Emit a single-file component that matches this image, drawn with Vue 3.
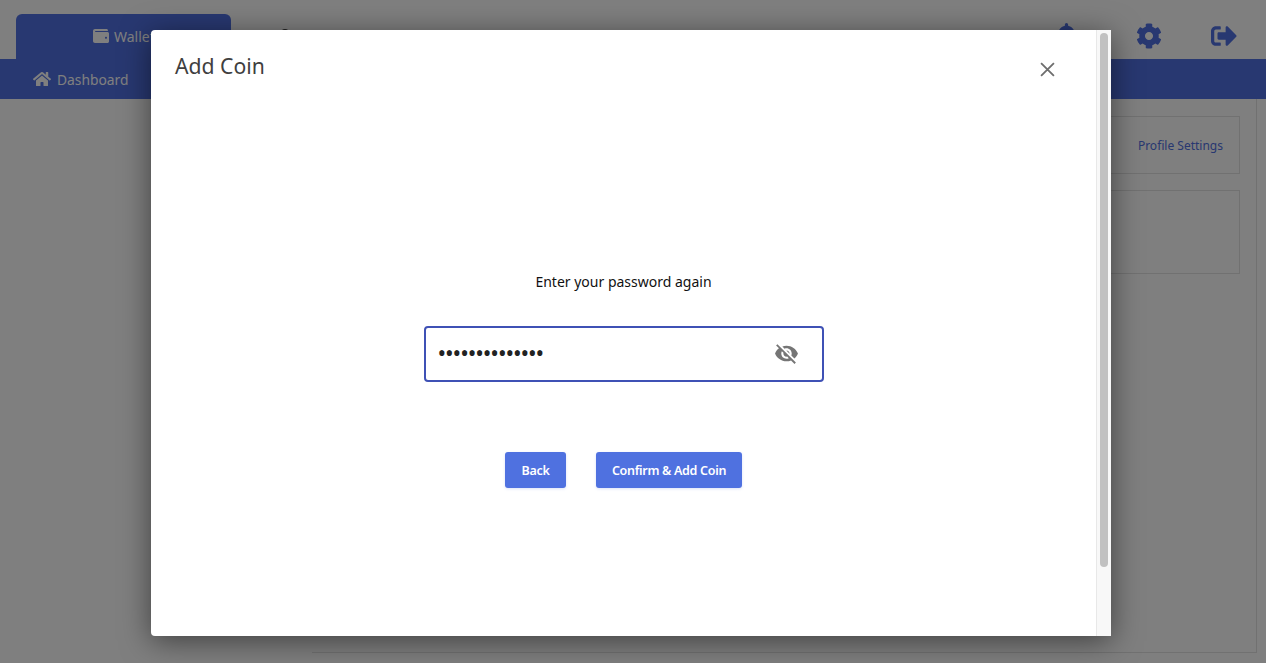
<template>
  <div class="page">
    <header class="top-bar">
      <div class="tabs">
        <div class="tab active">
          <svg class="tab-icon" viewBox="0 0 512 512"><path d="M461.2 128H80c-8.84 0-16-7.16-16-16s7.16-16 16-16h384c8.84 0 16-7.16 16-16 0-26.51-21.49-48-48-48H64C28.65 32 0 60.65 0 96v320c0 35.35 28.65 64 64 64h397.2c28.02 0 50.8-21.53 50.8-48V176c0-26.47-22.78-48-50.8-48zM416 340c-17.67 0-32-14.33-32-32s14.33-32 32-32 32 14.33 32 32-14.33 32-32 32z" /></svg>
          <span>Wallet</span>
        </div>
        <div class="tab-dot"></div>
      </div>
      <div class="top-icons">
        <svg class="top-icon bell" viewBox="0 0 448 512"><path d="M224 512c35.32 0 63.97-28.65 63.97-64H160.03c0 35.35 28.65 64 63.97 64zm215.39-149.71c-19.32-20.76-55.47-51.99-55.47-154.29 0-77.7-54.48-139.9-127.94-155.16V32c0-17.67-14.32-32-31.98-32s-31.98 14.33-31.98 32v20.84C118.56 68.1 64.08 130.3 64.08 208c0 102.3-36.15 133.53-55.47 154.29-6 6.45-8.66 14.16-8.61 21.71.11 16.4 12.98 32 32.1 32h383.8c19.12 0 32-15.6 32.1-32 .05-7.55-2.61-15.27-8.61-21.71z" /></svg>
        <svg class="top-icon gear" viewBox="0 0 512 512"><path d="M487.4 315.7l-42.6-24.6c4.3-23.2 4.3-47 0-70.2l42.6-24.6c4.9-2.8 7.1-8.6 5.5-14-11.1-35.6-30-67.8-54.7-94.6-3.8-4.1-10-5.1-14.8-2.3L380.8 110c-17.9-15.4-38.5-27.3-60.8-35.1V25.8c0-5.6-3.9-10.5-9.4-11.7-36.7-8.2-74.3-7.8-109.2 0-5.5 1.2-9.4 6.1-9.4 11.7V75c-22.2 7.9-42.8 19.8-60.8 35.1L88.7 85.5c-4.9-2.8-11-1.9-14.8 2.3-24.7 26.7-43.6 58.9-54.7 94.6-1.7 5.4.6 11.2 5.5 14L67.3 221c-4.3 23.2-4.3 47 0 70.2l-42.6 24.6c-4.9 2.8-7.1 8.6-5.5 14 11.1 35.6 30 67.8 54.7 94.6 3.8 4.1 10 5.1 14.8 2.3l42.6-24.6c17.9 15.4 38.5 27.3 60.8 35.1v49.2c0 5.6 3.9 10.5 9.4 11.7 36.7 8.2 74.3 7.8 109.2 0 5.5-1.2 9.4-6.1 9.4-11.7v-49.2c22.2-7.9 42.8-19.8 60.8-35.1l42.6 24.6c4.9 2.8 11 1.9 14.8-2.3 24.7-26.7 43.6-58.9 54.7-94.6 1.5-5.5-.7-11.3-5.6-14.1zM256 336c-44.1 0-80-35.9-80-80s35.9-80 80-80 80 35.9 80 80-35.9 80-80 80z" /></svg>
        <svg class="top-icon logout" viewBox="0 0 512 512"><path d="M497 273L329 441c-15 15-41 4.5-41-17v-96H152c-13.3 0-24-10.7-24-24v-96c0-13.3 10.7-24 24-24h136V88c0-21.4 25.9-32 41-17l168 168c9.3 9.4 9.3 24.6 0 34zM192 436v-40c0-6.6-5.4-12-12-12H96c-17.7 0-32-14.3-32-32V160c0-17.7 14.3-32 32-32h84c6.6 0 12-5.4 12-12V76c0-6.6-5.4-12-12-12H96c-53 0-96 43-96 96v192c0 53 43 96 96 96h84c6.6 0 12-5.4 12-12z" /></svg>
      </div>
    </header>

    <nav class="nav-bar">
      <svg class="nav-icon" viewBox="0 0 576 512"><path d="M280.37 148.26L96 300.11V464a16 16 0 0 0 16 16l112.06-.29a16 16 0 0 0 15.92-16V368a16 16 0 0 1 16-16h64a16 16 0 0 1 16 16v95.64a16 16 0 0 0 16 16.05L464 480a16 16 0 0 0 16-16V300L295.67 148.26a12.19 12.19 0 0 0-15.3 0zM571.6 251.47L488 182.56V44.05a12 12 0 0 0-12-12h-56a12 12 0 0 0-12 12v72.61L318.47 43a48 48 0 0 0-61 0L4.34 251.47a12 12 0 0 0-1.6 16.9l25.5 31A12 12 0 0 0 45.15 301l235.22-193.74a12.19 12.19 0 0 1 15.3 0L530.9 301a12 12 0 0 0 16.9-1.6l25.5-31a12 12 0 0 0-1.7-16.93z" /></svg>
      <span>Dashboard</span>
    </nav>

    <main class="content">
      <div class="panel">
        <div class="card card-top"><a class="card-link">Profile Settings</a></div>
        <div class="card card-bottom"></div>
      </div>
    </main>

    <div class="backdrop"></div>

    <div class="modal">
      <div class="modal-main">
        <div class="modal-head">
          <h2>Add Coin</h2>
          <svg class="close" viewBox="0 0 14 14"><path d="M1 1l12 12M13 1L1 13" /></svg>
        </div>
        <div class="modal-body">
          <p class="prompt">Enter your password again</p>
          <div class="field">
            <input class="pw" type="password" :value="password" readonly />
            <svg class="eye" viewBox="0 0 24 24"><path d="M12 7c2.76 0 5 2.24 5 5 0 .65-.13 1.26-.36 1.83l2.92 2.92c1.51-1.26 2.7-2.89 3.43-4.75-1.73-4.39-6-7.5-11-7.5-1.4 0-2.74.25-3.98.7l2.16 2.16C10.74 7.13 11.35 7 12 7zM2 4.27l2.28 2.28.46.46C3.08 8.3 1.78 10.02 1 12c1.73 4.39 6 7.5 11 7.5 1.55 0 3.03-.3 4.38-.84l.42.42L19.73 22 21 20.73 3.27 3 2 4.27zM7.53 9.8l1.55 1.55c-.05.21-.08.43-.08.65 0 1.66 1.34 3 3 3 .22 0 .44-.03.65-.08l1.55 1.55c-.67.33-1.41.53-2.2.53-2.76 0-5-2.24-5-5 0-.79.2-1.53.53-2.2zm4.31-.78l3.15 3.15.02-.16c0-1.66-1.34-3-3-3l-.17.01z" /></svg>
          </div>
          <div class="actions">
            <button class="btn btn-back">Back</button>
            <button class="btn btn-confirm">Confirm &amp; Add Coin</button>
          </div>
        </div>
      </div>
      <div class="scroll-track"><div class="scroll-thumb"></div></div>
    </div>
  </div>
</template>

<script setup>
const password = 'abcdefghijklmn'
</script>

<style>
html, body {
  margin: 0;
  overflow: hidden;
}
</style>

<style scoped>
.page {
  position: relative;
  height: 663px;
  overflow: hidden;
  background: #fff;
  font-family: "Noto Sans", "Open Sans", sans-serif;
  display: flex;
  flex-direction: column;
}

.top-bar {
  height: 59px;
  display: flex;
  justify-content: space-between;
  align-items: flex-end;
}

.tabs {
  display: flex;
  align-items: flex-end;
  padding-left: 16px;
}

.tab {
  width: 215px;
  height: 45px;
  box-sizing: border-box;
  padding-left: 77px;
  display: flex;
  align-items: center;
  gap: 5px;
  color: #fff;
  font-size: 14px;
  border-radius: 6px 6px 0 0;
}

.tab.active {
  background: #5070e2;
}

.tab-icon {
  width: 16px;
  height: 16px;
  fill: #fff;
  margin-bottom: 2px;
}

.tab-dot {
  width: 8px;
  height: 8px;
  border-radius: 50%;
  background: #444;
  margin: 0 0 22px 50px;
}

.top-icons {
  display: flex;
  align-items: center;
  height: 59px;
  padding: 0 29px 0 0;
}

.top-icon {
  width: 26px;
  height: 26px;
  fill: #5070e2;
  margin-left: 49px;
  margin-top: 12px;
}

.top-icon.bell {
  width: 23px;
  margin-left: 0;
}

.top-icon.gear {
  margin-left: 58px;
}

.nav-bar {
  height: 40px;
  background: #5070e2;
  display: flex;
  align-items: center;
  padding-left: 33px;
  gap: 6px;
  color: #fff;
  font-size: 13.8px;
}

.nav-icon {
  width: 18px;
  height: 16px;
  fill: #fff;
}

.content {
  flex: 1;
  display: flex;
  justify-content: flex-end;
  padding: 0 9px 10px 312px;
}

.panel {
  flex: 1;
  box-sizing: border-box;
  border-right: 1px solid #e3e3e3;
  border-bottom: 1px solid #e3e3e3;
  padding: 17px 16px 0 0;
  display: flex;
  flex-direction: column;
  gap: 16px;
}

.card {
  box-sizing: border-box;
  border: 1px solid #e3e3e3;
}

.card-top {
  height: 58px;
  display: flex;
  justify-content: flex-end;
  align-items: center;
  padding-right: 16px;
}

.card-bottom {
  height: 84px;
}

.card-link {
  color: #5070e2;
  font-size: 12px;
}

.backdrop {
  position: absolute;
  inset: 0;
  background: rgba(0, 0, 0, 0.5);
}

.modal {
  position: absolute;
  left: 151px;
  top: 30px;
  width: 960px;
  height: 606px;
  background: #fff;
  border-radius: 4px 0 0 4px;
  box-shadow: 0 5px 30px rgba(0, 0, 0, 0.5);
  display: flex;
}

.modal-main {
  flex: 1;
  min-width: 0;
}

.modal-head {
  display: flex;
  justify-content: space-between;
  padding: 20px 41px 0 24px;
}

.modal-head h2 {
  margin: 0;
  font-size: 21.2px;
  line-height: 32px;
  font-weight: 400;
  color: #3f3f3f;
}

.close {
  width: 15px;
  height: 15px;
  margin: 12px 0 0;
  stroke: #6e6e6e;
  stroke-width: 1.7;
  fill: none;
}

.modal-body {
  padding-top: 190px;
  display: flex;
  flex-direction: column;
  align-items: center;
}

.prompt {
  margin: 0;
  font-size: 14px;
  line-height: 20px;
  color: #111;
}

.field {
  position: relative;
  margin-top: 34px;
  width: 400px;
  height: 56px;
}

.pw {
  width: 100%;
  height: 100%;
  box-sizing: border-box;
  border: 2px solid #3f51b5;
  border-radius: 4px;
  outline: none;
  padding: 0 60px 2px 12px;
  font-family: inherit;
  font-size: 23px;
  letter-spacing: -1.1px;
  color: #222;
  background: #fff;
}

.eye {
  position: absolute;
  right: 25px;
  top: 15px;
  width: 25px;
  height: 25px;
  fill: #757575;
}

.actions {
  margin-top: 70px;
  display: flex;
  gap: 30px;
}

.btn {
  height: 36px;
  border: none;
  border-radius: 3px;
  background: #4f71e0;
  color: #fff;
  font-family: inherit;
  font-size: 12.5px;
  font-weight: 600;
  letter-spacing: -0.3px;
  padding: 0;
  box-shadow: 0 1px 3px rgba(80, 110, 220, 0.2);
}

.btn-back {
  width: 61px;
}

.btn-confirm {
  width: 146px;
}

.scroll-track {
  width: 15px;
  box-sizing: border-box;
  background: #f8f8f8;
  border-left: 1px solid #e8e8e8;
  padding: 3px 3px 0 3px;
}

.scroll-thumb {
  width: 8px;
  height: 534px;
  border-radius: 4px;
  background: #c1c1c1;
}
</style>
